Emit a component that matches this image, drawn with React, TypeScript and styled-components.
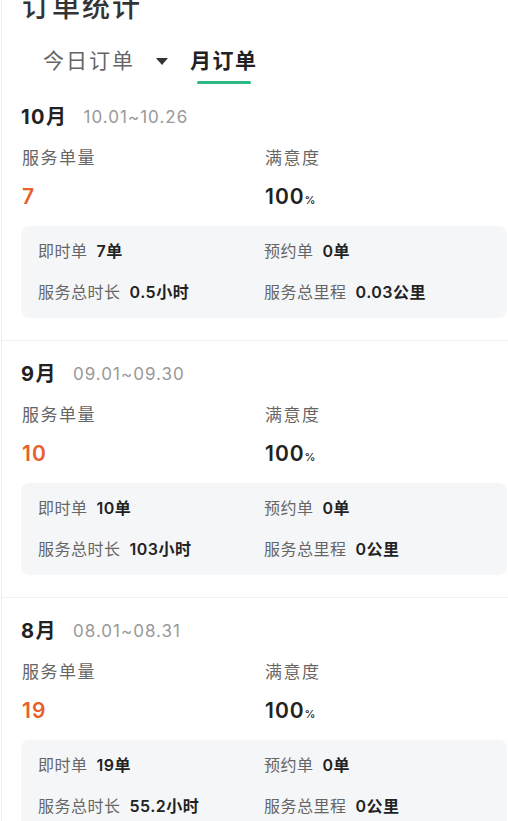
import React from 'react'
import styled, { createGlobalStyle } from 'styled-components'

const GlobalStyle = createGlobalStyle`
  html, body {
    margin: 0;
    padding: 0;
    background: #ffffff;
  }
  body {
    font-family: Inter, 'Noto Sans CJK SC', sans-serif;
    color: #222222;
    overflow: hidden;
  }
`

type MonthStat = {
  month: string
  range: string
  count: number
  satisfaction: number
  instant: number
  booked: number
  duration: string
  distance: string
}

const months: MonthStat[] = [
  {
    month: '10月',
    range: '10.01~10.26',
    count: 7,
    satisfaction: 100,
    instant: 7,
    booked: 0,
    duration: '0.5',
    distance: '0.03'
  },
  {
    month: '9月',
    range: '09.01~09.30',
    count: 10,
    satisfaction: 100,
    instant: 10,
    booked: 0,
    duration: '103',
    distance: '0'
  },
  {
    month: '8月',
    range: '08.01~08.31',
    count: 19,
    satisfaction: 100,
    instant: 19,
    booked: 0,
    duration: '55.2',
    distance: '0'
  }
]

export default function App() {
  return (
    <>
      <GlobalStyle />
      <Page>
        <Title>订单统计</Title>
        <Tabs>
          <Tab>
            <TabText>今日订单</TabText>
            <TabLine />
          </Tab>
          <Caret />
          <Tab>
            <TabText active>月订单</TabText>
            <TabLine active />
          </Tab>
        </Tabs>

        {months.map((m) => (
          <Section key={m.month}>
            <Header>
              <Month>{m.month}</Month>
              <Range>{m.range}</Range>
            </Header>
            <StatGrid>
              <Stat>
                <StatLabel>服务单量</StatLabel>
                <StatValue highlight>{m.count}</StatValue>
              </Stat>
              <Stat>
                <StatLabel>满意度</StatLabel>
                <StatValue>
                  {m.satisfaction}
                  <Unit>%</Unit>
                </StatValue>
              </Stat>
            </StatGrid>
            <DetailBox>
              <Detail>
                <DetailLabel>即时单</DetailLabel>
                <DetailValue>{m.instant}单</DetailValue>
              </Detail>
              <Detail>
                <DetailLabel>预约单</DetailLabel>
                <DetailValue>{m.booked}单</DetailValue>
              </Detail>
              <Detail>
                <DetailLabel>服务总时长</DetailLabel>
                <DetailValue>{m.duration}小时</DetailValue>
              </Detail>
              <Detail>
                <DetailLabel>服务总里程</DetailLabel>
                <DetailValue>{m.distance}公里</DetailValue>
              </Detail>
            </DetailBox>
          </Section>
        ))}
      </Page>
    </>
  )
}

const Page = styled.div`
  margin-left: 1px;
  border-left: 1px solid #ececec;
  min-height: 821px;
`

const Title = styled.h1`
  margin: -11px 0 0 0;
  padding-left: 20px;
  font-size: 28px;
  line-height: 36px;
  font-weight: 500;
  letter-spacing: 2px;
  color: #333333;
`

const Tabs = styled.div`
  display: flex;
  align-items: flex-start;
  padding: 21px 0 0 41px;
`

const Tab = styled.div`
  display: flex;
  flex-direction: column;
  align-items: center;
`

const TabText = styled.span<{ active?: boolean }>`
  font-size: 21px;
  line-height: 30px;
  letter-spacing: ${(p) => (p.active ? '1.5px' : '2px')};
  font-weight: ${(p) => (p.active ? 700 : 400)};
  color: ${(p) => (p.active ? '#222222' : '#666666')};
`

const TabLine = styled.div<{ active?: boolean }>`
  margin-top: 5px;
  width: 54px;
  height: 3px;
  border-radius: 2px;
  background: ${(p) => (p.active ? '#2bb883' : 'transparent')};
`

const Caret = styled.div`
  margin: 12px 22px 0 21px;
  width: 0;
  height: 0;
  border-left: 6px solid transparent;
  border-right: 6px solid transparent;
  border-top: 7px solid #333333;
`

const Section = styled.section`
  padding: 20px 1px 22px 19px;

  & + & {
    border-top: 1px solid #f0f0f0;
  }
`

const Header = styled.div`
  display: flex;
  align-items: center;
  gap: 16px;
  height: 26px;
`

const Month = styled.span`
  font-size: 20px;
  line-height: 26px;
  font-weight: 700;
  letter-spacing: 1.5px;
  color: #222222;
`

const Range = styled.span`
  font-size: 17px;
  line-height: 26px;
  letter-spacing: 1px;
  color: #999999;
`

const StatGrid = styled.div`
  display: grid;
  grid-template-columns: 1fr 1fr;
  margin-top: 16px;
`

const Stat = styled.div`
  display: flex;
  flex-direction: column;
  padding-left: 1px;
`

const StatLabel = styled.span`
  font-size: 17px;
  line-height: 24px;
  letter-spacing: 1.5px;
  color: #666666;
`

const StatValue = styled.span<{ highlight?: boolean }>`
  margin-top: 12px;
  font-size: 21px;
  line-height: 30px;
  font-weight: 600;
  letter-spacing: 1px;
  color: ${(p) => (p.highlight ? '#e8602c' : '#222222')};
`

const Unit = styled.span`
  font-size: 11px;
  font-weight: 500;
  letter-spacing: 0;
`

const DetailBox = styled.div`
  display: grid;
  grid-template-columns: 1fr 1fr;
  row-gap: 17px;
  margin-top: 11px;
  padding: 13px 17px 14px 17px;
  border-radius: 8px;
  background: #f5f6f8;
`

const Detail = styled.div`
  display: flex;
  align-items: baseline;
  gap: 9px;
  line-height: 24px;
`

const DetailLabel = styled.span`
  font-size: 16px;
  letter-spacing: 0.5px;
  color: #666666;
`

const DetailValue = styled.span`
  font-size: 16px;
  font-weight: 600;
  letter-spacing: 0.5px;
  color: #222222;
`
